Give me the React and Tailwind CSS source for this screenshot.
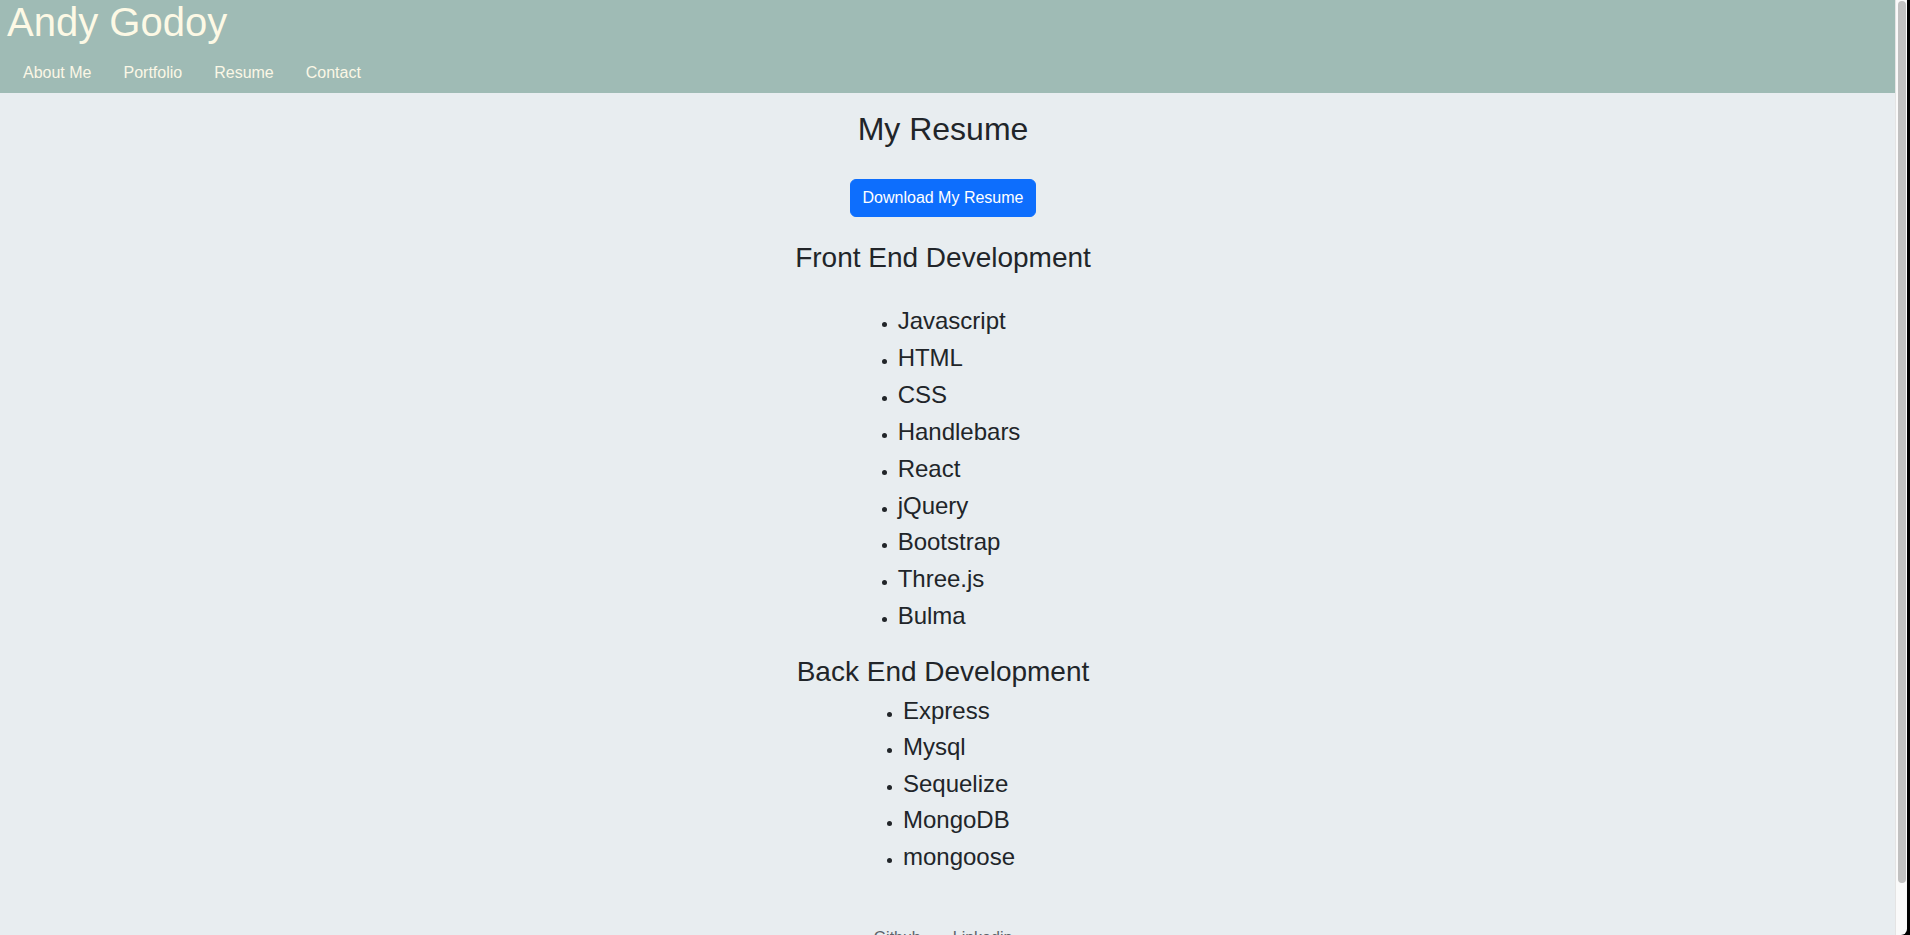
import React from 'react';

const frontEnd = ['Javascript', 'HTML', 'CSS', 'Handlebars', 'React', 'jQuery', 'Bootstrap', 'Three.js', 'Bulma'];
const backEnd = ['Express', 'Mysql', 'Sequelize', 'MongoDB', 'mongoose'];
const navLinks = ['About Me', 'Portfolio', 'Resume', 'Contact'];

const SkillList = ({ items, className = '' }) => (
  <ul className={`mx-auto w-fit list-disc pl-8 text-left text-[24px] marker:text-[15px] ${className}`}>
    {items.map((item) => (
      <li key={item}>{item}</li>
    ))}
  </ul>
);

const App = () => {
  return (
    <div className="flex h-screen overflow-hidden bg-black font-['Liberation_Sans',Arial,sans-serif]">
      <div className="min-w-0 flex-1 overflow-hidden bg-[#e8edf0] text-[#212529]">
        <header className="h-[93px] bg-[#9fbbb5] pl-[7px]">
          <h1 className="text-[40px] leading-[44px] text-[#fdf9e5]">Andy Godoy</h1>
          <nav className="mt-[9px] flex">
            {navLinks.map((link) => (
              <a key={link} href="#" className="px-4 py-2 text-base leading-6 text-[#fbf7e6]">
                {link}
              </a>
            ))}
          </nav>
        </header>

        <main className="pr-[9px] text-center">
          <h2 className="mt-[17px] text-[32px] leading-[38px]">My Resume</h2>

          <button
            type="button"
            className="mt-[31px] rounded-[6px] border border-[#0d6efd] bg-[#0d6efd] px-3 py-[6px] text-base leading-6 text-white"
          >
            Download My Resume
          </button>

          <h3 className="mt-[24px] text-[28px] leading-[34px]">Front End Development</h3>
          <SkillList items={frontEnd} className="mt-[28px] leading-[36.9px]" />

          <h3 className="mt-[19.5px] text-[28px] leading-[34px]">Back End Development</h3>
          <SkillList items={backEnd} className="mt-[4px] leading-[36.55px]" />

          <footer className="mt-[51px] flex justify-center text-base leading-6 text-[#5c636a]">
            <a href="#" className="px-4">Github</a>
            <a href="#" className="px-4">Linkedin</a>
          </footer>
        </main>
      </div>

      {/* scrollbar as in the shot */}
      <div className="flex w-[12px] flex-col rounded-br-[6px] border-l border-[#e4e4e4] bg-[#fafafa] pt-px pl-[2px]">
        <div className="h-[882px] w-[8px] rounded-full bg-[#c1c1c1]" />
      </div>
      <div className="w-[3px] bg-black" />
    </div>
  );
};

export default App;
